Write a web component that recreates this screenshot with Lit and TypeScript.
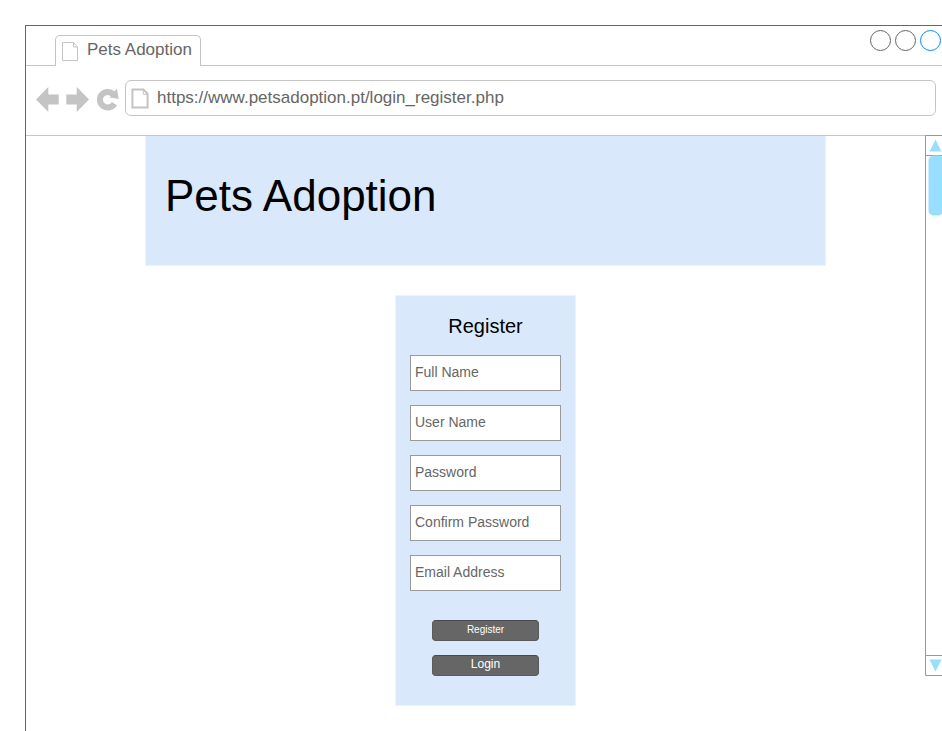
import { LitElement, html, css, svg } from "lit";
import { customElement } from "lit/decorators.js";

@customElement("app-root")
export class AppRoot extends LitElement {
  static styles = css`
    :host { display: block; width: 942px; height: 731px; overflow: hidden; background: #fff;
      font-family: "Liberation Sans", Arial, sans-serif; color: #666; box-sizing: border-box; padding: 25px 0 0 25px; }
    * { box-sizing: border-box; }
    svg { display: block; flex: none; }
    .window { height: 706px; border: solid #666; border-width: 1px 0 0 1px; }
    .tabs { height: 40px; border-bottom: 1px solid #c4c4c4; display: flex; justify-content: space-between; padding: 9px 0 0 29px; }
    .tab { width: 146px; height: 31px; border: 1px solid #c4c4c4; border-bottom: 0; border-radius: 5px 5px 0 0; background: #fff;
      display: flex; padding: 5px 0 0 6px; font-size: 17px; line-height: 17px; white-space: nowrap; }
    .tab-label { margin: 0 0 0 8px; }
    .controls { margin: -6px 0 0; }
    .bar { height: 70px; border-bottom: 1px solid #c4c4c4; display: flex; padding: 14px 6px 0 10px; }
    .nav { width: 89px; }
    .address { flex: 1; height: 36px; border: 1px solid #c4c4c4; border-radius: 6px; display: flex; padding: 7px 0 0 5px;
      font-size: 17px; line-height: 20px; }
    .url { margin-left: 8px; }
    .body { display: flex; justify-content: space-between; margin-top: -1px; padding-left: 119px; }
    .page { width: 681px; display: flex; flex-direction: column; align-items: center; padding-top: 1px; }
    .banner { width: 681px; height: 130px; background: #dae8fc; border: solid #ecf3fd; border-width: 0 1px 1px; padding: 34px 0 0 19px;
      margin: 0; font-size: 44px; line-height: 52px; font-weight: 400; color: #000; }
    .panel { width: 181px; height: 411px; margin-top: 29px; background: #dae8fc; border: 1px solid #ecf3fd; padding-top: 19px;
      display: flex; flex-direction: column; align-items: center; }
    .title { margin: 0 0 17px; font-size: 20px; line-height: 23px; font-weight: 400; color: #000; }
    .field { width: 151px; height: 36px; border: 1px solid #999; background: #fff; margin-bottom: 14px; padding: 8px 4px;
      font-size: 14px; line-height: 16px; }
    .button { width: 107px; height: 21px; margin-bottom: 14px; border: 1px solid #5a5a5a; border-top-color: #4a4a4a; border-radius: 4px;
      background: #666; color: #fff; text-align: center; font-size: 12px; line-height: 16px; }
    .first { margin-top: 15px; font-size: 10px; line-height: 18px; }
    .scroll { width: 17px; }
  `;

  render() {
    return html`<div class="window">
      <div class="tabs">
        <div class="tab">
          <svg width="17" height="21" viewBox="0 0 17 21" fill="none" stroke="#c4c4c4">
            <path d="M.5 1.5H11.5L15.5 6V19.5H.5Z" /><path d="M11.5 1.5V6H15.5" />
          </svg>
          <span class="tab-label">Pets Adoption</span>
        </div>
        <svg width="73" height="24" viewBox="869 29 73 24" class="controls" fill="none" stroke-width="1">
          ${[["#666", 880.5], ["#666", 905.5], ["#008cff", 930.5]].map(
            ([c, x]) => svg`<circle cx=${x} cy="40.5" r="10" stroke=${c} />`)}
        </svg>
      </div>
      <div class="bar">
        <svg class="nav" width="89" height="36" viewBox="36 80 89 36" fill="#c4c4c4">
          <path d="M36 99.5L48.3 87V94.5H58.7V104.5H48.3V112Z" />
          <path d="M89 99.5L76.7 87V94.5H66.3V104.5H76.7V112Z" />
          <path d="M114.5 91.3L117 88.8L118.6 99L108.5 97.2L111.2 96.4A4.8 4.8 0 1 0 111.9 102L117 105.2A10.8 10.8 0 1 1 114.5 91.3Z" />
        </svg>
        <div class="address">
          <svg width="18" height="22" viewBox="131 88 18 22" fill="none" stroke="#c4c4c4" stroke-width="2">
            <path d="M132.4 89.4H143.5L147.6 94V107.6H132.4Z" /><path d="M143.3 90V94.3H147.5" stroke-width="1" />
          </svg>
          <span class="url">https://www.petsadoption.pt/login_register.php</span>
        </div>
      </div>
      <div class="body">
        <div class="page">
          <h1 class="banner">Pets Adoption</h1>
          <div class="panel">
            <h2 class="title">Register</h2>
            ${["Full Name", "User Name", "Password", "Confirm Password", "Email Address"].map((t) => html`<div class="field">${t}</div>`)}
            <div class="button first">Register</div>
            <div class="button">Login</div>
          </div>
        </div>
        <svg class="scroll" width="17" height="542" viewBox="925 135 17 542" fill="none">
          <path d="M950 135.5H925.5V675.5H950M925.5 155.5H950M925.5 655.5H950" stroke="#999" />
          <rect x="928.5" y="155.5" width="15" height="60" rx="5" fill="#99ddff" />
          <path d="M935.5 139.5L941.5 151.5H929.5ZM929.5 659.5H941.5L935.5 671.5Z" fill="#99ddff" />
        </svg>
      </div>
    </div>`;
  }
}
